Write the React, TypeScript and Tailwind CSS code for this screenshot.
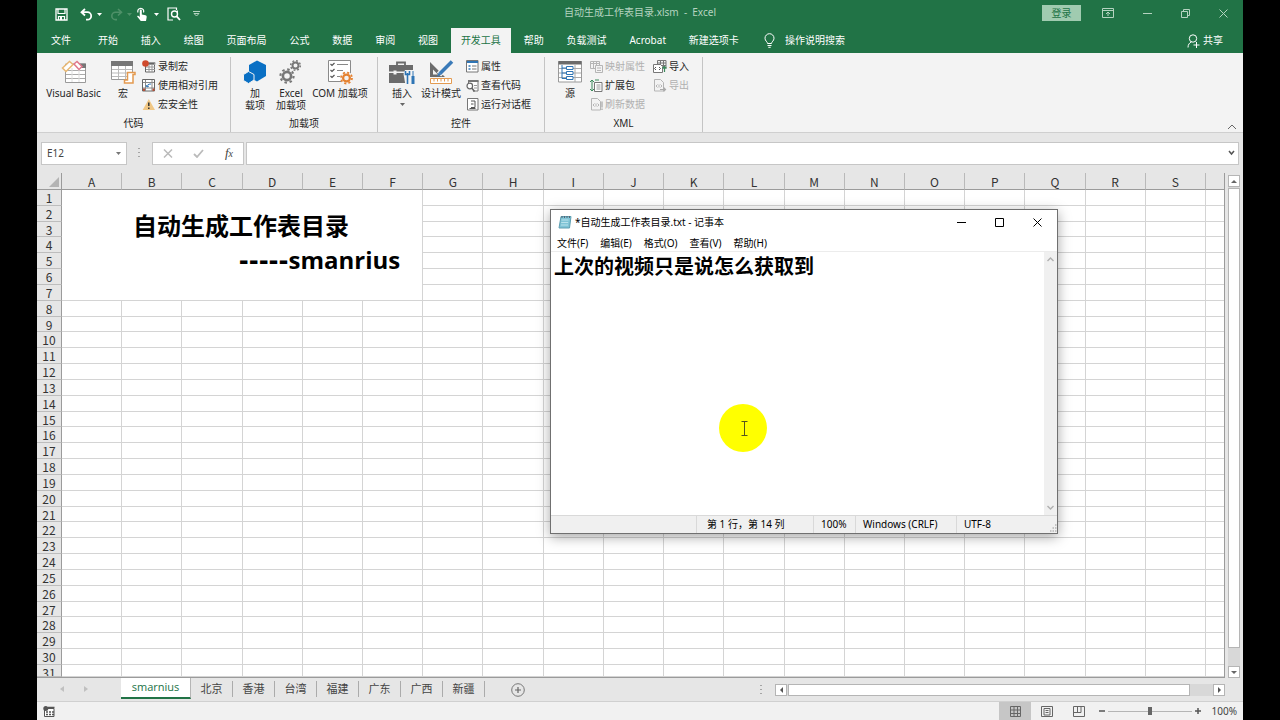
import React from 'react';

const COLUMNS = 'ABCDEFGHIJKLMNOPQRS'.split('');
const ROWS = Array.from({ length: 31 }, (_, i) => i + 1);

// The title block covers A1:F7
const MERGED_COLS = 6;
const MERGED_ROWS = 7;

const RIBBON_TABS = [
    '开始', '插入', '绘图', '页面布局', '公式', '数据', '审阅',
    '视图', '开发工具', '帮助', '负载测试', 'Acrobat', '新建选项卡',
];
const SHEETS = ['北京', '香港', '台湾', '福建', '广东', '广西', '新疆'];
const NOTEPAD_MENU = ['文件(F)', '编辑(E)', '格式(O)', '查看(V)', '帮助(H)'];

// --- ICONS ---

type IconProps = { w: number; h: number; className?: string; children: React.ReactNode };

const Icon = ({ w, h, className = '', children }: IconProps) => (
    <svg width={w} height={h} viewBox={`0 0 ${w} ${h}`} fill="none" className={`shrink-0 ${className}`} aria-hidden="true">
        {children}
    </svg>
);

const SaveIcon = () => (
    <Icon w={13} h={13}>
        <path d="M1 1h11v11H1z" stroke="#fff" strokeWidth="1.3" />
        <path d="M3 1v4.5h7V1M3.5 12V8.5h6V12" stroke="#fff" strokeWidth="1.2" />
        <path d="M5 9h2v3H5z" fill="#fff" />
    </Icon>
);

const UndoIcon = () => (
    <Icon w={13} h={13}>
        <path d="M5 1 1.5 4.2 5 7.5M2 4.2h5.5a3.7 3.7 0 0 1 0 7.4H6" stroke="#fff" strokeWidth="1.8" />
    </Icon>
);

const RedoIcon = () => (
    <Icon w={13} h={13}>
        <path d="M8 1l3.5 3.2L8 7.5M11 4.2H5.5a3.7 3.7 0 0 0 0 7.4H7" stroke="#4e9068" strokeWidth="1.6" />
    </Icon>
);

const TouchIcon = () => (
    <Icon w={12} h={15}>
        <path d="M2 5.5a3 3 0 1 1 5.500 0" stroke="#fff" strokeWidth="1.2" />
        <path d="M3.8 3.5c0-1.2 2-1.2 2 0v4l3.7.8c1 .3 1.3.9 1.2 1.8L10 14H4.800L1.3 9.800c-.4-.8.6-1.500 1.300-.9l1.200 1z" fill="#fff" />
    </Icon>
);

const PreviewIcon = () => (
    <Icon w={14} h={14}>
        <path d="M9.5 3V1H1v12h5" stroke="#fff" strokeWidth="1.2" />
        <circle cx="7.5" cy="7" r="3" stroke="#fff" strokeWidth="1.4" />
        <path d="M9.5 9.2 13 13" stroke="#fff" strokeWidth="1.8" />
        <path d="M10.5 3.5V6" stroke="#fff" />
    </Icon>
);

const Caret = ({ className = '' }: { className?: string }) => (
    <Icon w={5} h={3} className={className}>
        <path d="M0 0h5L2.500 3z" fill="currentColor" />
    </Icon>
);

const BulbIcon = () => (
    <Icon w={11} h={15}>
        <path d="M3.5 10.5c0-1.8-2.5-2.5-2.5-5.3a4.500 4.500 0 0 1 9 0c0 2.800-2.500 3.500-2.500 5.300zM3.500 12.500h4M4.300 14.300h2.400" stroke="#fff" />
    </Icon>
);

const ShareIcon = () => (
    <Icon w={13} h={14}>
        <circle cx="6" cy="4.5" r="3.7" stroke="#fff" />
        <path d="M1 13.5c0-3 1.5-4.8 3.500-5.500M9.500 8v6M6.500 11h6" stroke="#fff" />
    </Icon>
);

const VisualBasicIcon = () => (
    <Icon w={26} h={24}>
        <path d="M4.5 4h20v18.5h-20z" fill="#fff" stroke="#9a9a9a" />
        <path d="M17 3.5h8V8h-8z" fill="#777" />
        <path d="M5 10.5h19M5 14.5h19M5 18.5h19" stroke="#aaa" />
        <path d="M11 8v14M18 8v14" stroke="#ddd" />
        <path d="M1.5 8 8.5 1.5l3.5 3-7 7z" fill="#fff" stroke="#e8b873" strokeWidth="1.5" />
        <path d="m13 4 3-2.5 5 5-3 3z" fill="#fff" stroke="#e0788c" strokeWidth="1.5" />
    </Icon>
);

const MacroIcon = () => (
    <Icon w={26} h={24}>
        <path d="M1.5 1.5h21v18h-21z" fill="#fff" stroke="#999" />
        <path d="M1 1h22v5H1z" fill="#777" />
        <path d="M2 9.5h20M2 13h20M2 16.5h20M8.5 6v13M15.500 6v13" stroke="#bbb" />
        <path d="M17.5 12.5H25v2h-2V23h-8.500v-3h3z" fill="#fff" stroke="#e39a50" strokeWidth="1.5" />
    </Icon>
);

const RecordIcon = () => (
    <Icon w={14} h={13}>
        <path d="M3.5 3.5h9v8.5h-9z" fill="#fff" stroke="#666" />
        <path d="M6 2.5h7v2H6zM4 7h9M4 9.500h9M7 4v8M10 4v8" stroke="#999" />
        <circle cx="3.5" cy="3.5" r="3.3" fill="#cf4a2c" />
    </Icon>
);

const RelativeIcon = () => (
    <Icon w={14} h={13}>
        <path d="M.5.5h12v11.5H.5z" fill="#fff" stroke="#666" />
        <path d="M1 3.5h11M1 9h11M3.5 1v11M10 1v11" stroke="#888" />
        <path d="M5 8c0-2 1-3 4-3M5 8l-1-2M5 8l2-1" stroke="#2f75b5" />
        <path d="M1 9.500h2V12H1zM10.500 9.500h2V12h-2z" fill="#b5523a" />
    </Icon>
);

const WarningIcon = () => (
    <Icon w={14} h={13}>
        <path d="M6.8 1 13 12H.6z" fill="#f0c785" />
        <path d="M6.8 4.5V8M6.8 9.5v1.500" stroke="#333" strokeWidth="1.5" />
    </Icon>
);

const AddInIcon = () => (
    <Icon w={24} h={24}>
        <path d="M14 .5 23 5v11l-9 5.5L6 17V5z" fill="#0a70c4" />
        <path d="M5.5 11.5 11 14.5v5.500l-5.500 3.500L.5 20.500v-6z" fill="#0a70c4" stroke="#f3f3f3" />
    </Icon>
);

const Gear = ({ cx, cy, r, color }: { cx: number; cy: number; r: number; color: string }) => (
    <g stroke={color}>
        <circle cx={cx} cy={cy} r={r * 0.62} strokeWidth={r * 0.4} />
        <circle cx={cx} cy={cy} r={r} strokeWidth={r * 0.32} strokeDasharray={`${r * 0.38} ${r * 0.405}`} />
    </g>
);

const GearsIcon = () => (
    <Icon w={24} h={26}>
        <Gear cx={16.5} cy={6.5} r={4.8} color="#777" />
        <Gear cx={8} cy={17} r={6.6} color="#777" />
    </Icon>
);

const ComAddInIcon = () => (
    <Icon w={27} h={26}>
        <path d="M1.5 1.5h22v21h-22z" fill="#fff" stroke="#8a8a8a" />
        <path d="m3.5 5 1.500 1.500L7.500 4M3.500 11 5 12.500 7.500 10M3.500 17 5 18.500 7.500 16" stroke="#555" strokeWidth="1.2" />
        <path d="M10 5.5h11M10 11.5h6M10 17.5h3" stroke="#888" />
        <circle cx="19.5" cy="19" r="6.5" fill="#f3f3f3" />
        <Gear cx={19.5} cy={19} r={5.5} color="#e58231" />
    </Icon>
);

const ToolboxIcon = () => (
    <Icon w={26} h={25}>
        <path d="M8 5V2.5h8V5" stroke="#6b6b6b" strokeWidth="1.8" />
        <path d="M0 5h24v6.5H0zM0 13h24v10H0z" fill="#6b6b6b" />
        <path d="M4.5 10.5h3v4h-3z" fill="#f3f3f3" />
        <path d="M14.500 14 16 10h10v15h-9.500z" fill="#f3f3f3" />
        <path d="M18.500 13v11M16.500 11v3.500h4V11" stroke="#2f75b5" strokeWidth="1.6" />
        <path d="M24 11v5" stroke="#2f75b5" />
        <path d="M24 16v8" stroke="#2f75b5" strokeWidth="3" />
    </Icon>
);

const DesignIcon = () => (
    <Icon w={26} h={25}>
        <path d="M2 2v15h15zM5 9.5v5h5z" fill="#6b6b6b" fillRule="evenodd" />
        <path d="M2.5 18.5h21v5h-21z" fill="#fff" stroke="#e39a50" />
        <path d="M6 19v2.500M9.500 19v2.500M13 19v2.500M16.500 19v2.500M20 19v2.500" stroke="#e39a50" />
        <path d="M23.5 2 11 14.5" stroke="#f3f3f3" strokeWidth="6" />
        <path d="M24 1.5 12 13.5" stroke="#3a7ab8" strokeWidth="3.6" />
        <path d="m10.8 12.3 2.400 2.400L9 16.500z" fill="#3a7ab8" />
    </Icon>
);

const PropertiesIcon = () => (
    <Icon w={13} h={13}>
        <path d="M.5.5h11.5V12H.5z" fill="#fff" stroke="#777" />
        <path d="M1 2h11" stroke="#2f75b5" strokeWidth="2" />
        <path d="M2.5 6h2M2.5 9h2" stroke="#2f75b5" strokeWidth="1.5" />
        <path d="M6 6h4.5M6 9h4.5" stroke="#777" />
    </Icon>
);

const ViewCodeIcon = () => (
    <Icon w={13} h={13}>
        <path d="M2.5 4V1.500H12V12H7" fill="#fff" stroke="#777" />
        <path d="M2 2h10.5" stroke="#777" strokeWidth="2" />
        <path d="M8 6.5h3M8 9h3" stroke="#999" />
        <circle cx="3.8" cy="7" r="2.8" fill="#fff" stroke="#666" strokeWidth="1.2" />
        <path d="m5.8 9 2.700 3.500" stroke="#666" strokeWidth="1.6" />
    </Icon>
);

const RunDialogIcon = () => (
    <Icon w={13} h={13}>
        <path d="M1.5.5H12V12H1.500z" fill="#fff" stroke="#777" />
        <path d="M5 3h4v6.500H5M5 6h2.500M3.500 10.500h6" stroke="#555" />
    </Icon>
);

const SourceIcon = () => (
    <Icon w={24} h={24}>
        <path d="M.5 1.5h23V22H.5z" fill="#fff" stroke="#999" />
        <path d="M.5 1h23v3.5H.5z" fill="#6b6b6b" />
        <path d="M1 8.5h22M1 13h22M1 17.5h22M17 5v17" stroke="#aaa" />
        <path d="M4 5v13.5h4M4 8h4M4 13h4" stroke="#2f75b5" />
        <path d="M8.5 6.5h6.500v3H8.500zM8.500 11.500h6.500v3H8.500zM8.500 16.500h6.500v3H8.500z" fill="#fff" stroke="#2f75b5" />
    </Icon>
);

const MapPropsIcon = () => (
    <Icon w={13} h={13}>
        <path d="M.5 1.5h9v7h-9zM1 3.500h8M3.500 2v6M6.500 2v6" stroke="#b5b5b5" />
        <path d="M5.5 5.5h7v7h-7z" fill="#f3f3f3" stroke="#b5b5b5" />
        <path d="M7 8h4M7 10.500h4" stroke="#b5b5b5" />
    </Icon>
);

const ExpansionIcon = () => (
    <Icon w={13} h={13}>
        <path d="M4.5 3.5h7.500v9H4.500z" fill="#fff" stroke="#777" />
        <path d="M6.5 6h4M6.5 8h4M6.5 10h4" stroke="#999" />
        <path d="M2 1v11M0 3l2-2 2 2M0 10l2 2 2-2M5 1h4" stroke="#3c8a5c" />
    </Icon>
);

// XML file page, shared by export and refresh
const XmlFile = ({ color }: { color: string }) => (
    <g stroke={color}>
        <path d="M1.5.5h6l3 3v8.500h-9z" />
        <path d="m4.5 5.5-1.500 1.500 1.500 1.500M7.500 5.500 9 7 7.500 8.500M6 5.500v3" />
    </g>
);

const RefreshIcon = () => (
    <Icon w={13} h={13}>
        <XmlFile color="#b5b5b5" />
        <path d="M12 3.5v6M12 10.500V12" stroke="#b5b5b5" strokeWidth="1.5" />
    </Icon>
);

const ImportIcon = () => (
    <Icon w={14} h={13}>
        <path d="M4.5.5H13V8H4.500zM5 3h8M5 5.500h8M7.500 1v7M10.500 1v7" stroke="#777" />
        <path d="M.5 4.5h7l2 2V12.500h-9z" fill="#fff" stroke="#777" />
        <path d="m3 7-1.500 1.500L3 10M6 7l1.500 1.500L6 10" stroke="#555" />
        <path d="M11.5 12V6.500M9.500 8.500l2-2 2 2" stroke="#3c8a5c" strokeWidth="1.2" />
    </Icon>
);

const ExportIcon = () => (
    <Icon w={14} h={13}>
        <XmlFile color="#b5b5b5" />
        <path d="M7 10.5h5.500M10.500 8.500l2 2-2 2" stroke="#aaa" strokeWidth="1.2" />
    </Icon>
);

// --- RIBBON PARTS ---

type LargeProps = { icon: React.ReactNode; lines: string[]; width: string; menu?: boolean };

const LargeButton = ({ icon, lines, width, menu }: LargeProps) => (
    <button className={`flex flex-col items-center ${width}`}>
        <span className="flex h-[30px] items-center justify-center">{icon}</span>
        {lines.map((line) => (
            <span key={line} className="leading-3 whitespace-nowrap">{line}</span>
        ))}
        {menu && <Caret className="mt-1 text-[#666]" />}
    </button>
);

type SmallProps = { icon: React.ReactNode; label: string; disabled?: boolean };

const SmallButton = ({ icon, label, disabled }: SmallProps) => (
    <button disabled={disabled} className="flex h-[19px] items-center gap-[2px] whitespace-nowrap disabled:text-[#b0b0b0]">
        {icon}
        {label}
    </button>
);

type GroupProps = { title: string; className: string; children: React.ReactNode };

const RibbonGroup = ({ title, className, children }: GroupProps) => (
    <section className={`flex flex-col border-r border-[#c4c4c4] ${className}`}>
        <div className="flex h-[57px] pl-[6px]">{children}</div>
        <h2 className="text-center leading-[18px]">{title}</h2>
    </section>
);

const Ribbon = () => (
    <div className="flex h-20 shrink-0 items-start border-b border-[#cfcfcf] bg-[#f3f3f3] pt-1 text-[10px] text-[#262626]">
        <RibbonGroup title="代码" className="w-[194px]">
            <LargeButton icon={<VisualBasicIcon />} lines={['Visual Basic']} width="w-[61px]" />
            <LargeButton icon={<MacroIcon />} lines={['宏']} width="w-[38px]" />
            <div>
                <SmallButton icon={<RecordIcon />} label="录制宏" />
                <SmallButton icon={<RelativeIcon />} label="使用相对引用" />
                <SmallButton icon={<WarningIcon />} label="宏安全性" />
            </div>
        </RibbonGroup>
        <RibbonGroup title="加载项" className="w-[147px]">
            <LargeButton icon={<AddInIcon />} lines={['加', '载项']} width="w-9" />
            <LargeButton icon={<GearsIcon />} lines={['Excel', '加载项']} width="w-9" />
            <LargeButton icon={<ComAddInIcon />} lines={['COM 加载项']} width="w-[62px]" />
        </RibbonGroup>
        <RibbonGroup title="控件" className="w-[167px]">
            <LargeButton icon={<ToolboxIcon />} lines={['插入']} width="w-9" menu />
            <LargeButton icon={<DesignIcon />} lines={['设计模式']} width="w-[42px]" />
            <div className="pl-1">
                <SmallButton icon={<PropertiesIcon />} label="属性" />
                <SmallButton icon={<ViewCodeIcon />} label="查看代码" />
                <SmallButton icon={<RunDialogIcon />} label="运行对话框" />
            </div>
        </RibbonGroup>
        <RibbonGroup title="XML" className="w-[158px]">
            <LargeButton icon={<SourceIcon />} lines={['源']} width="w-[38px]" />
            <div className="w-16 pl-px">
                <SmallButton icon={<MapPropsIcon />} label="映射属性" disabled />
                <SmallButton icon={<ExpansionIcon />} label="扩展包" />
                <SmallButton icon={<RefreshIcon />} label="刷新数据" disabled />
            </div>
            <div>
                <SmallButton icon={<ImportIcon />} label="导入" />
                <SmallButton icon={<ExportIcon />} label="导出" disabled />
            </div>
        </RibbonGroup>
        <button aria-label="折叠功能区" className="mr-[6px] ml-auto self-end pb-[2px]">
            <Icon w={10} h={6}>
                <path d="m1 5 4-4 4 4" stroke="#666" />
            </Icon>
        </button>
    </div>
);

const TitleBar = () => (
    <header className="grid h-7 shrink-0 grid-cols-[1fr_auto_1fr] items-center bg-[#217346] text-[10px] text-[#b5d3c0]">
        <div className="flex items-center pl-[18px] text-white">
            <button aria-label="保存"><SaveIcon /></button>
            <button aria-label="撤消" className="ml-3 flex items-center gap-1"><UndoIcon /><Caret /></button>
            <button aria-label="恢复" disabled className="ml-2 flex items-center gap-1 text-[#4e9068]"><RedoIcon /><Caret /></button>
            <button aria-label="触摸模式" className="ml-1 flex items-center gap-[6px]"><TouchIcon /><Caret /></button>
            <button aria-label="打印预览" className="ml-2"><PreviewIcon /></button>
            <button aria-label="自定义快速访问工具栏" className="ml-3">
                <Icon w={7} h={6}>
                    <path d="M0 .5h7M1 2.5h5L3.500 5z" stroke="#b5d3c0" />
                </Icon>
            </button>
        </div>
        <h1 className="pb-[3px] whitespace-pre">自动生成工作表目录.xlsm  -  Excel</h1>
        <div className="flex items-center justify-end pr-[15px] pb-[2px]">
            <button className="mr-[21px] h-4 w-[39px] bg-[#a0cbb0] leading-4 text-[#217346]">登录</button>
            <button aria-label="功能区显示选项" className="mr-[29px]">
                <Icon w={12} h={10}>
                    <path d="M.5.5h11v9H.5zM.5 2.500h11M6 8V4M4 6l2-2 2 2" stroke="#b5d3c0" />
                </Icon>
            </button>
            <button aria-label="最小化" className="mr-[29px]">
                <Icon w={9} h={9}><path d="M0 4.5h9" stroke="#b5d3c0" /></Icon>
            </button>
            <button aria-label="向下还原" className="mr-[29px]">
                <Icon w={9} h={9}><path d="M.5 2.5h6v6h-6zM2.500 2.500v-2h6v6h-2" stroke="#b5d3c0" /></Icon>
            </button>
            <button aria-label="关闭">
                <Icon w={9} h={9}><path d="m.5.5 8 8m0-8-8 8" stroke="#b5d3c0" /></Icon>
            </button>
        </div>
    </header>
);

const TabStrip = () => (
    <div className="flex h-[25px] shrink-0 items-stretch bg-[#217346] text-[10px] text-white">
        <button className="pr-[17px] pl-[14px]">文件</button>
        <nav className="flex w-[661px] justify-between">
            {RIBBON_TABS.map((tab) => (
                <button
                    key={tab}
                    className={tab === '开发工具' ? 'bg-[#f3f3f3] px-[10px] text-[#217346]' : 'px-[10px]'}
                >
                    {tab}
                </button>
            ))}
        </nav>
        <button className="ml-[15px] flex items-center gap-[10px]"><BulbIcon />操作说明搜索</button>
        <button className="mr-5 ml-auto flex items-center gap-[3px]"><ShareIcon />共享</button>
    </div>
);

const FormulaBar = () => (
    <div className="flex h-10 shrink-0 items-center bg-[#e6e6e6] pr-1 pl-1">
        <div className="flex h-[23px] w-[86px] items-center border border-[#c6c6c6] bg-white pr-[5px]">
            <input aria-label="名称框" defaultValue="E12" className="w-full min-w-0 pl-[5px] text-[10px] text-[#444] outline-none" />
            <Caret className="text-[#777]" />
        </div>
        <Icon w={2} h={10} className="mr-3 ml-[11px]">
            <path d="M1 0v10" stroke="#a5a5a5" strokeWidth="2" strokeDasharray="1 3" />
        </Icon>
        <div className="flex h-[23px] w-[92px] items-center justify-between border border-[#c6c6c6] bg-white px-[10px]">
            <button aria-label="取消">
                <Icon w={10} h={9}><path d="m1 .5 8 8m0-8-8 8" stroke="#bbb" strokeWidth="1.5" /></Icon>
            </button>
            <button aria-label="输入">
                <Icon w={11} h={9}><path d="m1 5 3 3 6-7" stroke="#bbb" strokeWidth="1.8" /></Icon>
            </button>
            <button aria-label="插入函数" className="font-['Liberation_Serif',serif] text-[13px] leading-4 text-[#444] italic">
                f<span className="text-[10px]">x</span>
            </button>
        </div>
        <div className="ml-[2px] flex h-[23px] min-w-0 flex-1 items-center border border-[#c6c6c6] bg-white pr-[3px]">
            <input aria-label="编辑栏" className="min-w-0 flex-1 px-1 text-[11px] outline-none" />
            <Icon w={7} h={6}><path d="m1 1 2.500 3L6 1" stroke="#555" strokeWidth="1.5" /></Icon>
        </div>
    </div>
);

const SheetGrid = () => (
    <table className="grid min-w-0 flex-1 grid-cols-[25px_repeat(19,minmax(0,1fr))_18px] grid-rows-[17px_repeat(30,minmax(0,1fr))_12px] border-r border-b border-[#9b9b9b] bg-white font-['Noto_Sans_CJK_SC',sans-serif] text-[12px] text-[#333]">
        <thead className="contents">
            <tr className="contents">
                <td className="flex items-end justify-end border-r border-b border-[#9b9b9b] bg-[#e6e6e6] p-[2px]">
                    <Icon w={10} h={10}><path d="M10 0v10H0z" fill="#b4b4b4" /></Icon>
                </td>
                {COLUMNS.map((col) => (
                    <th key={col} className="border-r border-b border-r-[#b9b9b9] border-b-[#9b9b9b] bg-[#e6e6e6] text-center leading-[17px] font-normal">
                        {col}
                    </th>
                ))}
                <td className="border-b border-[#9b9b9b] bg-[#e6e6e6]" />
            </tr>
        </thead>
        <tbody className="contents">
            {ROWS.map((row) => (
                <tr key={row} className="contents">
                    <th className="overflow-hidden border-r border-b border-r-[#9b9b9b] border-b-[#bdbdbd] bg-[#e6e6e6] text-center leading-4 font-normal">
                        {row}
                    </th>
                    {row === 1 && (
                        <td
                            colSpan={MERGED_COLS}
                            rowSpan={MERGED_ROWS}
                            className="col-span-6 row-span-7 border-r border-b border-[#d4d4d4] pt-[19px] font-['Open_Sans','Noto_Sans_CJK_SC',sans-serif] text-[24px] leading-[34px] font-bold text-black"
                        >
                            <p className="pl-[71px]">自动生成工作表目录</p>
                            <p className="pr-[22px] text-right">
                                <span className="font-['DejaVu_Sans',sans-serif]">-----</span>smanrius
                            </p>
                        </td>
                    )}
                    {COLUMNS.slice(row <= MERGED_ROWS ? MERGED_COLS : 0).map((col) => (
                        <td key={col} className="border-r border-b border-[#d4d4d4]" />
                    ))}
                    <td className="border-b border-[#d4d4d4]" />
                </tr>
            ))}
        </tbody>
    </table>
);

const VerticalScroll = () => (
    <div className="mr-[3px] ml-[3px] flex w-3 shrink-0 flex-col pt-[2px]">
        <button aria-label="向上滚动" className="flex h-3 items-center justify-center border border-[#b5b5b5] bg-white">
            <Icon w={6} h={3}><path d="M0 3h6L3 0z" fill="#666" /></Icon>
        </button>
        <div className="flex flex-1 flex-col bg-[#d8d8d8] pt-px pb-[18px]">
            <div className="flex-1 border border-[#b5b5b5] bg-white" />
        </div>
        <button aria-label="向下滚动" className="flex h-3 items-center justify-center border border-[#b5b5b5] bg-white">
            <Icon w={6} h={3}><path d="M0 0h6L3 3z" fill="#666" /></Icon>
        </button>
    </div>
);

const SheetTabs = () => (
    <div className="flex h-[23px] shrink-0 items-start bg-[#e6e6e6] text-[11px] text-[#444]">
        <div className="flex h-[22px] w-[84px] items-center gap-5 pl-[23px]">
            <button aria-label="上一个工作表"><Icon w={4} h={6}><path d="M4 0v6L0 3z" fill="#c0c0c0" /></Icon></button>
            <button aria-label="下一个工作表"><Icon w={4} h={6}><path d="M0 0v6l4-3z" fill="#c0c0c0" /></Icon></button>
        </div>
        <button className="h-[21px] w-[70px] border-r border-b-2 border-r-[#b5b5b5] border-b-[#217346] bg-white font-['Open_Sans',sans-serif] text-[#217346]">smarnius</button>
        {SHEETS.map((sheet) => (
            <button key={sheet} className="flex h-[22px] w-[42px] items-center justify-between">
                <span className="flex-1 text-center">{sheet}</span>
                <span className="h-4 w-px bg-[#ababab]" />
            </button>
        ))}
        <button aria-label="新工作表" className="ml-[26px] pt-[5px]">
            <Icon w={14} h={14}>
                <circle cx="7" cy="7" r="6.3" stroke="#777" />
                <path d="M7 4v6M4 7h6" stroke="#666" strokeWidth="1.2" />
            </Icon>
        </button>
        <div className="ml-auto flex w-[465px] items-center pt-[6px]">
            <Icon w={2} h={10} className="mr-[13px]">
                <path d="M1 0v10" stroke="#a5a5a5" strokeWidth="2" strokeDasharray="1 3" />
            </Icon>
            <button aria-label="向左滚动" className="flex h-3 w-3 items-center justify-center border border-[#b5b5b5] bg-white">
                <Icon w={3} h={6}><path d="M3 0v6L0 3z" fill="#555" /></Icon>
            </button>
            <div className="flex h-3 flex-1 bg-[#d8d8d8] pr-[23px] pl-px">
                <div className="flex-1 border border-[#b5b5b5] bg-white" />
            </div>
            <button aria-label="向右滚动" className="flex h-3 w-3 items-center justify-center border border-[#b5b5b5] bg-white">
                <Icon w={3} h={6}><path d="M0 0v6l3-3z" fill="#555" /></Icon>
            </button>
        </div>
        <div className="w-[18px]" />
    </div>
);

const StatusBar = () => (
    <footer className="flex h-[19px] shrink-0 items-center border-t border-[#d0d0d0] bg-[#f1f1f1] pr-[6px] pl-[6px] text-[10px] text-[#444]">
        <button aria-label="录制宏">
            <Icon w={12} h={11}>
                <path d="M1.5 2.5h9.500v8H1.500z" fill="#fff" stroke="#555" />
                <path d="M5 1.5h6.500M3 6h2M6 6h2M9 6h2M3 8.500h2M6 8.500h2M9 8.500h2" stroke="#555" strokeWidth="1.3" />
                <circle cx="2.8" cy="2.5" r="2.5" fill="#555" />
            </Icon>
        </button>
        <button aria-label="普通" className="ml-auto flex h-full w-8 items-center justify-center bg-[#c6c6c6]">
            <Icon w={11} h={11}><path d="M.5.5h10v10H.5zM.5 4h10M.5 7.500h10M4 .5v10M7.500.5v10" stroke="#666" /></Icon>
        </button>
        <button aria-label="页面布局" className="flex w-8 justify-center">
            <Icon w={12} h={11}><path d="M.5.5h11v10H.5zM3 2.500h6v6.500H3zM4.500 4.500h3M4.500 6.500h3" stroke="#666" /></Icon>
        </button>
        <button aria-label="分页预览" className="flex w-8 justify-center">
            <Icon w={12} h={11}><path d="M.5.5h11v10H.5zM4.500.5v6M.5 6.500h7.500v-6" stroke="#666" /></Icon>
        </button>
        <button aria-label="缩小" className="ml-1">
            <Icon w={6} h={6}><path d="M0 3h6" stroke="#555" strokeWidth="1.5" /></Icon>
        </button>
        <input
            type="range"
            aria-label="显示比例"
            min={0}
            max={200}
            defaultValue={100}
            className="mx-[3px] h-2 w-[84px] appearance-none bg-[linear-gradient(#b5b5b5,#b5b5b5)] bg-[length:100%_1px] bg-center bg-no-repeat [&::-webkit-slider-thumb]:h-2 [&::-webkit-slider-thumb]:w-1 [&::-webkit-slider-thumb]:appearance-none [&::-webkit-slider-thumb]:bg-[#666]"
        />
        <button aria-label="放大">
            <Icon w={6} h={6}><path d="M0 3h6M3 0v6" stroke="#555" strokeWidth="1.5" /></Icon>
        </button>
        <span className="w-9 text-right">100%</span>
    </footer>
);

// --- NOTEPAD (floats over the workbook) ---

const NotepadWindow = () => (
    <section className="absolute top-[209px] left-[513px] flex h-[325px] w-[508px] flex-col border border-[#707070] bg-white text-[10px] text-black shadow-[0_3px_12px_rgba(0,0,0,0.35)]">
        <header className="flex h-6 shrink-0 items-center pr-[15px] pl-[7px]">
            <Icon w={14} h={14}>
                <path d="M3 1.5h10L11.500 13H1z" fill="#7fc4d6" stroke="#5e9fb2" />
                <path d="M4 1v2M6.500 1v2M9 1v2M11.500 1v2" stroke="#567" />
                <path d="M3.5 5h7M3.2 7.500h7M3 10h7" stroke="#b9e2ec" />
            </Icon>
            <h2 className="ml-[3px] flex-1">*自动生成工作表目录.txt - 记事本</h2>
            <button aria-label="最小化" className="mr-[29px]"><Icon w={9} h={9}><path d="M0 4.5h9" stroke="#000" /></Icon></button>
            <button aria-label="最大化" className="mr-[29px]"><Icon w={9} h={9}><path d="M.5.5h8v8h-8z" stroke="#000" /></Icon></button>
            <button aria-label="关闭"><Icon w={9} h={9}><path d="m.5.5 8 8m0-8-8 8" stroke="#000" /></Icon></button>
        </header>
        <nav className="flex h-[18px] shrink-0 items-center gap-3 border-b border-[#ececec] pt-px pl-[6px]">
            {NOTEPAD_MENU.map((item) => (
                <button key={item}>{item}</button>
            ))}
        </nav>
        <div className="flex min-h-0 flex-1">
            <textarea
                aria-label="文本编辑器"
                defaultValue="上次的视频只是说怎么获取到"
                className="min-w-0 flex-1 resize-none overflow-hidden pl-[3px] font-['Noto_Sans_CJK_SC',sans-serif] text-[20px] leading-7 font-bold outline-none"
            />
            <div className="flex w-[13px] flex-col items-center justify-between bg-[#f0f0f0] py-[5px]">
                <Icon w={7} h={5}><path d="m.5 4 3-3 3 3" stroke="#b0b0b0" strokeWidth="1.4" /></Icon>
                <Icon w={7} h={5}><path d="m.5 1 3 3 3-3" stroke="#b0b0b0" strokeWidth="1.4" /></Icon>
            </div>
        </div>
        <footer className="flex h-[18px] shrink-0 items-stretch border-t border-[#d9d9d9] bg-[#f0f0f0] leading-[17px]">
            <span className="flex-1 border-r border-[#d9d9d9]" />
            <span className="w-[117px] border-r border-[#d9d9d9] pl-[10px]">第 1 行，第 14 列</span>
            <span className="w-[42px] border-r border-[#d9d9d9] pl-[7px]">100%</span>
            <span className="w-[101px] border-r border-[#d9d9d9] pl-[7px]">Windows (CRLF)</span>
            <span className="flex w-[100px] items-end justify-between pl-[7px]">
                UTF-8
                <Icon w={8} h={8} className="mb-px">
                    <path d="M6 1h1.500M3.500 4H5M6 4h1.500M1 7h1.500M3.500 7H5M6 7h1.500" stroke="#b5b5b5" strokeWidth="1.5" />
                </Icon>
            </span>
        </footer>

        {/* Highlighted text cursor */}
        <div className="absolute top-[194px] left-[168px] flex h-12 w-12 items-center justify-center rounded-full bg-[#ffff00]">
            <Icon w={7} h={15} className="ml-[3px]">
                <path d="M.5.5h6M3.5.5v14M.5 14.5h6" stroke="#55551f" />
            </Icon>
        </div>
    </section>
);

export default function App() {
    return (
        <div className="h-screen bg-black px-[37px] font-['Noto_Sans','Noto_Sans_CJK_SC',sans-serif]">
            <main className="relative flex h-full flex-col overflow-hidden bg-[#e6e6e6]">
                <TitleBar />
                <TabStrip />
                <Ribbon />
                <FormulaBar />
                <div className="flex min-h-0 flex-1">
                    <SheetGrid />
                    <VerticalScroll />
                </div>
                <SheetTabs />
                <StatusBar />
                <NotepadWindow />
            </main>
        </div>
    );
}
